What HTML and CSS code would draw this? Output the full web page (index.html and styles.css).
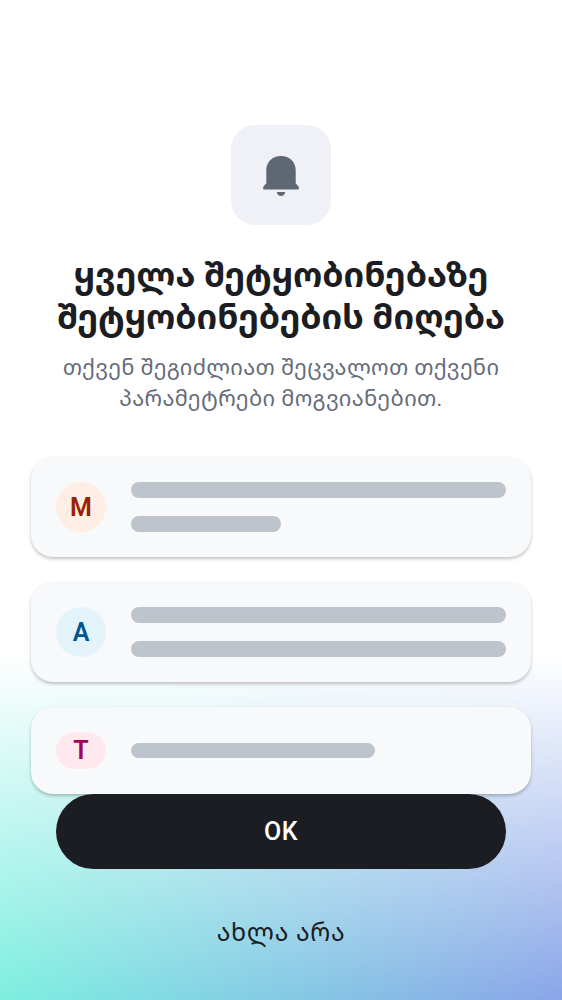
FILE: index.html
```html
<!DOCTYPE html>
<html lang="ka">
<head>
<meta charset="utf-8">
<title>შეტყობინებები</title>
<link rel="stylesheet" href="styles.css">
</head>
<body>
<main class="screen">
  <div class="bell">
    <svg width="36" height="40" viewBox="0 0 36 40" fill="#5f6774"><path d="M18 0C9.500 0 3.300 6 3.300 14V27.200L0.700 30.200C-0.600 31.900 0 33.600 2 33.600H34C36 33.600 36.600 31.900 35.300 30.200L32.700 27.200V14C32.700 6 26.500 0 18 0Z"/><path d="M13.800 36H22.200C21.800 38.500 20.200 40 18 40S14.200 38.500 13.800 36Z"/></svg>
  </div>
  <h1 class="title">ყველა შეტყობინებაზე<br>შეტყობინებების მიღება</h1>
  <p class="sub">თქვენ შეგიძლიათ შეცვალოთ თქვენი<br>პარამეტრები მოგვიანებით.</p>
  <section class="cards">
    <div class="card"><span class="avatar orange">M</span><div class="lines"><i class="bar"></i><i class="bar short"></i></div></div>
    <div class="card"><span class="avatar blue">A</span><div class="lines"><i class="bar"></i><i class="bar"></i></div></div>
    <div class="card small"><span class="avatar pink">T</span><div class="lines"><i class="bar medium"></i></div></div>
  </section>
  <button class="ok">OK</button>
  <button class="later">ახლა არა</button>
</main>
</body>
</html>
```
FILE: styles.css
```css
* { box-sizing: border-box; }
body { margin: 0; font-family: Roboto, "Noto Sans Georgian", "DejaVu Sans", sans-serif; }
.screen {
  height: 1000px;
  padding: 125px 31px 0;
  display: flex;
  flex-direction: column;
  align-items: center;
  overflow: hidden;
  background: linear-gradient(180deg, #fff 0, #fff 655px, rgba(255,255,255,0) 1000px), linear-gradient(90deg, #7defe0, #8aa5e8);
}
.bell { width: 100px; height: 100px; padding-top: 2px; border-radius: 24px; background: #f0f1f6; display: flex; align-items: center; justify-content: center; flex: none; }
.title { margin: 29px 0 0; font-size: 34.15px; line-height: 42px; font-weight: 700; color: #1c1d22; text-align: center; white-space: nowrap; }
.sub { margin: 14px 0 0; font-size: 21.875px; letter-spacing: .33px; line-height: 31px; color: #646b78; text-align: center; white-space: nowrap; }
.cards { width: 500px; margin-top: 43px; display: flex; flex-direction: column; gap: 25px; }
.card { height: 100px; padding: 25px; border-radius: 22px; background: #f8f9fb; display: flex; gap: 25px; box-shadow: 0 2px 3.5px rgba(0,0,0,.24); }
.small { height: 87px; }
.avatar { width: 50px; height: 100%; border-radius: 25px; display: flex; align-items: center; justify-content: center; font-size: 25px; font-weight: 600; flex: none; }
.orange { background: #ffeee4; color: #9b2200; }
.blue { background: #e2f4f9; color: #045590; }
.pink { background: #ffe9ee; color: #a1045a; }
.lines { flex: 1; display: flex; flex-direction: column; justify-content: space-between; }
.small .lines { justify-content: center; }
.bar { display: block; height: 15.6px; border-radius: 8px; background: #bdc4cc; }
.short { width: 150px; }
.medium { width: 244px; }
.ok { width: 450px; height: 75px; flex: none; border: 0; border-radius: 38px; background: #1c1d22; color: #fff; font: 500 25px/30px Roboto, sans-serif; letter-spacing: .4px; }
.later { margin-top: 45px; border: 0; padding: 0; background: none; color: #1c1d22; font: 400 25px/38px Roboto, "Noto Sans Georgian", "DejaVu Sans", sans-serif; letter-spacing: .65px; }
```
